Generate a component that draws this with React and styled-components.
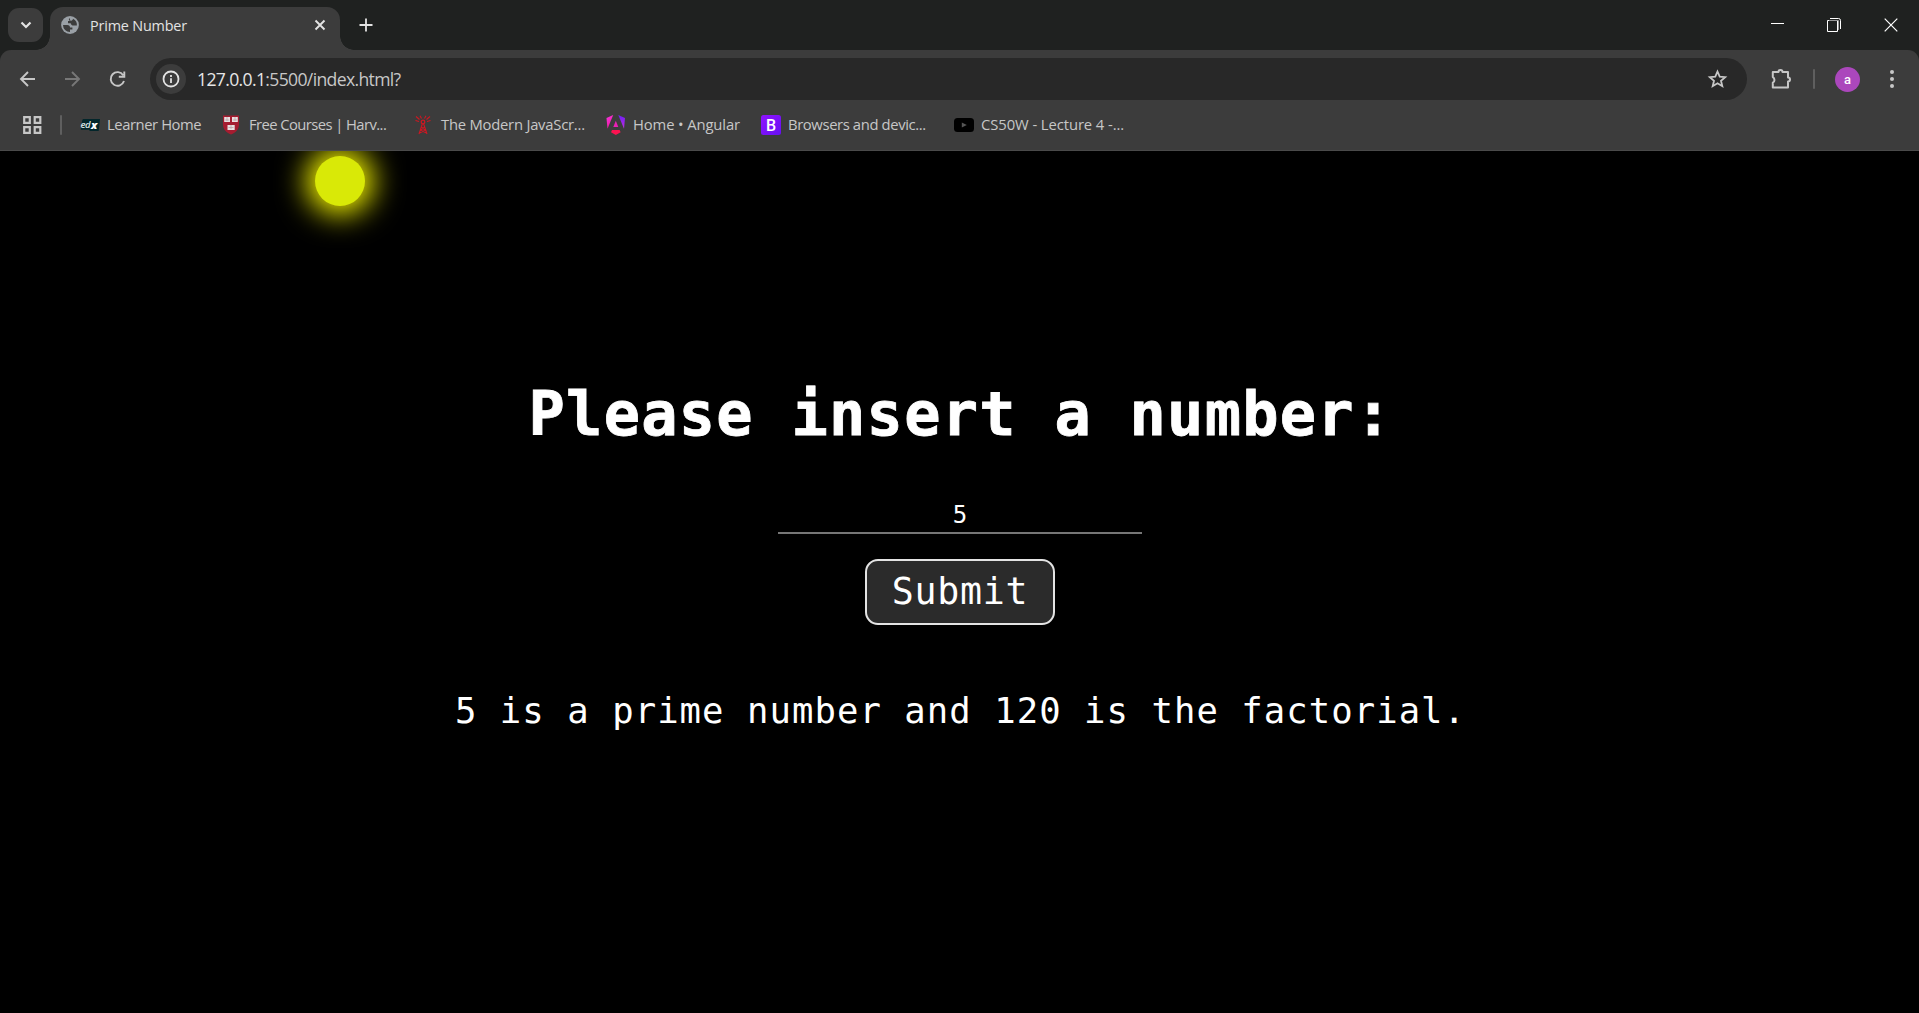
import React from "react";
import styled, { createGlobalStyle } from "styled-components";

const GlobalStyle = createGlobalStyle`
  * { box-sizing: border-box; }
  html, body { margin: 0; background: #000; overflow: hidden; }
`;

const Window = styled.div`
  display: flex;
  flex-direction: column;
  width: 100%;
  height: 1013px;
  font-family: "Open Sans", "Noto Sans", sans-serif;
  color: #c7c7c7;
  svg { display: block; flex: none; }
`;

const TabStrip = styled.header`
  display: flex;
  height: 50px;
  padding-left: 8px;
  background: #1f2120;
`;

const TabSearch = styled.button`
  display: flex;
  align-items: center;
  justify-content: center;
  width: 35px;
  height: 34px;
  margin: 8px 7px 0 0;
  padding: 0;
  border: 0;
  border-radius: 11px;
  background: #3c3c3c;
`;

const Tab = styled.div`
  position: relative;
  display: flex;
  align-items: center;
  width: 290px;
  height: 43px;
  margin-top: 7px;
  padding: 0 13px 7px 11px;
  border-radius: 13px 13px 0 0;
  background: #3c3c3c;
  &::before, &::after {
    content: "";
    position: absolute;
    bottom: 0;
    width: 14px;
    height: 14px;
  }
  &::before {
    left: -14px;
    background: radial-gradient(circle at 0 0, transparent 13.5px, #3c3c3c 14px);
  }
  &::after {
    right: -14px;
    background: radial-gradient(circle at 100% 0, transparent 13.5px, #3c3c3c 14px);
  }
`;

const Label = styled.span`
  flex: 1;
  min-width: 0;
  font-size: ${(p) => p.$size || 14.8}px;
  line-height: 24px;
  letter-spacing: ${(p) => p.$track || 0}px;
  white-space: pre;
  color: ${(p) => p.$color || "#c7c7c7"};
`;

const TabTitle = styled(Label)`
  margin-left: 11px;
  padding-top: 2px;
`;

const NewTab = styled.div`
  margin: 17px 0 0 19px;
`;

const WindowControls = styled.div`
  display: flex;
  align-items: center;
  gap: 43px;
  margin-left: auto;
  padding-right: 21px;
  height: 49px;
`;

const ToolbarBacking = styled.div`
  background: #1f2120;
`;

const Toolbar = styled.nav`
  display: flex;
  align-items: center;
  height: 58px;
  padding: 0 15px 0 17px;
  border-radius: 11px 11px 0 0;
  background: #3c3c3c;
`;

const NavButtons = styled.div`
  display: flex;
  gap: 23px;
  width: 133px;
`;

const Omnibox = styled.div`
  display: flex;
  align-items: center;
  width: 1597px;
  height: 42px;
  padding: 0 17px 0 6px;
  border-radius: 21px;
  background: #282828;
`;

const SiteInfo = styled.span`
  display: flex;
  align-items: center;
  justify-content: center;
  width: 30px;
  height: 30px;
  margin-right: 11px;
  border-radius: 50%;
  background: #3c3c3c;
`;

const Host = styled.span`
  color: #e6e6e6;
`;

const Divider = styled.span`
  flex: none;
  width: 2px;
  height: 20px;
  border-radius: 1px;
  background: #5f5f5f;
`;

const ToolbarDivider = styled(Divider)`
  margin: 0 20px;
`;

const ToolbarActions = styled.div`
  display: flex;
  align-items: center;
  margin-left: 22px;
`;

const Avatar = styled.span`
  display: flex;
  align-items: center;
  justify-content: center;
  width: 25px;
  height: 25px;
  margin-right: 29px;
  border-radius: 50%;
  background: #ab47bc;
  color: #fff;
  font: 500 13px/25px Roboto, sans-serif;
`;

const BookmarksBar = styled.nav`
  display: flex;
  align-items: center;
  height: 43px;
  padding: 0 0 9px 22px;
  border-bottom: 1px solid #4a4a4a;
  background: #3c3c3c;
`;

const BarDivider = styled(Divider)`
  margin: 0 18px 0 17px;
`;

const Bookmark = styled.div`
  display: flex;
  align-items: center;
  gap: 7px;
  width: ${(p) => p.$width}px;
  ${Label} { padding-bottom: 2px; }
`;

const Page = styled.main`
  display: flex;
  flex-direction: column;
  align-items: center;
  flex: 1;
  overflow: hidden;
  background: #000;
  color: #fff;
  font-family: "DejaVu Sans Mono", monospace;
`;

const Sun = styled.div`
  align-self: flex-start;
  flex: none;
  width: 50px;
  height: 50px;
  margin: 5px 0 0 315px;
  border-radius: 50%;
  background: #d9e907;
  box-shadow: 0 0 30px 8px yellow;
`;

const Title = styled.h1`
  margin: 168px 0 0;
  padding-left: 2px;
  font-size: 60.3px;
  line-height: 80px;
  letter-spacing: 1.26px;
  white-space: nowrap;
  -webkit-text-stroke: 0.8px #fff;
`;

const Form = styled.form`
  display: flex;
  flex-direction: column;
  align-items: center;
`;

const NumberInput = styled.input`
  width: 364px;
  height: 34px;
  margin-top: 46px;
  padding: 0 0 2px 1px;
  border: 0;
  border-bottom: 2px solid #767676;
  border-radius: 0;
  outline: 0;
  background: transparent;
  color: #fff;
  font: 24px/30px "DejaVu Sans Mono", monospace;
  text-align: center;
`;

const Submit = styled.button`
  width: 190.5px;
  height: 66.5px;
  margin: 24.5px 0 0 1px;
  padding: 0;
  border: 2px solid #e4e4e4;
  border-radius: 13px;
  background: #2b2b2b;
  color: #fff;
  font: 36.6px/60px "DejaVu Sans Mono", monospace;
  letter-spacing: 0.7px;
`;

const Result = styled.p`
  margin: 61px 0 0;
  padding-left: 2px;
  font-size: 35.6px;
  line-height: 50px;
  letter-spacing: 1.05px;
  white-space: nowrap;
`;

const Stroke = ({ w = 20, h = 20, color = "#c7c7c7", width = 2, children }) => (
  <svg width={w} height={h} viewBox={`0 0 ${w} ${h}`} fill="none" stroke={color} strokeWidth={width}>
    {children}
  </svg>
);

const Globe = () => (
  <svg width="18" height="18" viewBox="0 0 18 18">
    <circle cx="9" cy="9" r="8.9" fill="#9aa0a6" />
    <path d="M2 9h4.2c2 0 2.8 1 2.8 2.4h2.4v2.2H9v2.4A7 7 0 0 1 2 9zM8.5 2.1c-1 .6-.8 2.6.6 3H7v2.1h2.7c.3 1.6 1.3 2.4 2.8 2.4h3.4A7 7 0 0 0 12 2.7c-.2 1.4-1.3 2-2.6 2z" fill="#3c3c3c" />
  </svg>
);

const EdxIcon = () => (
  <svg width="20" height="20" viewBox="0 0 20 20">
    <path d="M3 4h17l-1.3 12H9.5v-1.3H.8L2.2 5.2z" fill="#03262b" />
    <text x="0.5" y="12.6" fontFamily="Open Sans, sans-serif" fontSize="9.5" fontStyle="italic" fontWeight="600" fill="#dce5e6" letterSpacing="-.5">ed</text>
    <text x="11" y="14" fontFamily="Open Sans, sans-serif" fontSize="11" fontStyle="italic" fontWeight="800" fill="#fff">x</text>
  </svg>
);

const ShieldIcon = () => (
  <svg width="20" height="20" viewBox="0 0 20 20">
    <path d="M1 .5h16v9c0 5-3 7.800-8 10-5-2.200-8-5-8-10z" fill="#a51c30" />
    <g fill="#e9dfe0">
      <path d="M2.200 2h5.800v5H2.200zM10 2h5.800v5H10zM5.500 10h7.200v5H5.500z" />
    </g>
    <path d="M5 2v4M13 2v4M9 10v4M3.200 5h4M11 5h4M6.500 12.500h5" stroke="#b59da1" strokeWidth=".7" />
  </svg>
);

const TowerIcon = () => (
  <Stroke color="#cf1722" width={1.3}>
    <circle cx="9" cy="7" r="1.8" />
    <path d="M8.300 9L5 19M9.700 9L13 19M7.300 12l4.300 3.200L5.500 18M10.700 12l-4.200 3.200 6 2.800M5.500 4.500L2 1.500M12.500 4.500L16 1.500M5 6.500L1.500 5.500M13 6.500l3.500-1M7.500 3.500L6 .8M10.500 3.500L12 .8" strokeWidth="1.100" />
  </Stroke>
);

const AngularIcon = () => (
  <svg width="20" height="20" viewBox="0 0 20 20">
    <defs>
      <linearGradient id="ngLeft" x1="0" y1="0" x2=".5" y2="1">
        <stop offset="0" stopColor="#f637e3" /><stop offset="1" stopColor="#f0189b" />
      </linearGradient>
      <linearGradient id="ngRight" x1="0" y1="0" x2="0" y2="1">
        <stop offset="0" stopColor="#6d20f5" /><stop offset="1" stopColor="#c12ce0" />
      </linearGradient>
    </defs>
    <path d="M7.200 0L.5 3.100l1 10.700z" fill="url(#ngLeft)" />
    <path d="M12.300 0L19 3.100l-1 10.700z" fill="url(#ngRight)" />
    <path d="M9.800 5.800l2.500 6.200H7.300z" fill="#ea1fb5" />
    <path d="M6 15h7.600l1 2.200L9.800 20 5 17.200z" fill="#fb1250" />
  </svg>
);

const BootstrapIcon = () => (
  <svg width="20" height="20" viewBox="0 0 20 20">
    <defs>
      <linearGradient id="bs" x1="0" y1="0" x2="1" y2="1">
        <stop offset="0" stopColor="#9013fe" /><stop offset="1" stopColor="#6610f2" />
      </linearGradient>
    </defs>
    <rect width="20" height="20" rx="2.500" fill="url(#bs)" />
    <text x="10" y="15.600" textAnchor="middle" fontFamily="Roboto, sans-serif" fontSize="16" fontWeight="500" fill="#fff">B</text>
  </svg>
);

const VideoIcon = () => (
  <svg width="20" height="20" viewBox="0 0 20 20">
    <rect y="3" width="20" height="14" rx="3.500" fill="#000" />
    <path d="M7.800 7.500l5 2.500-5 2.500z" fill="#555" />
  </svg>
);

const BOOKMARKS = [
  { icon: EdxIcon, text: "Learner Home", width: 142, track: -0.43 },
  { icon: ShieldIcon, text: "Free Courses | Harv...", width: 192, track: -0.58 },
  { icon: TowerIcon, text: "The Modern JavaScr...", width: 192, track: -0.23 },
  { icon: AngularIcon, text: "Home • Angular", width: 155, track: -0.12 },
  { icon: BootstrapIcon, text: "Browsers and devic...", width: 193, track: -0.38 },
  { icon: VideoIcon, text: "CS50W - Lecture 4 -...", width: 175, track: -0.08 },
];

export default function App() {
  return (
    <Window>
      <GlobalStyle />
      <TabStrip>
        <TabSearch aria-label="Search tabs">
          <Stroke w={12} h={8} color="#e3e3e3" width={2.2}><path d="M1.500 1.500L6 6l4.500-4.500" /></Stroke>
        </TabSearch>
        <Tab>
          <Globe />
          <TabTitle $size={14.4} $track={-0.18} $color="#e3e3e3">Prime Number</TabTitle>
          <Stroke w={14} h={14} color="#e3e3e3" width={1.9}><path d="M2.500 2.500l9 9M11.500 2.500l-9 9" /></Stroke>
        </Tab>
        <NewTab>
          <Stroke w={14} h={16} color="#e3e3e3" width={1.8}><path d="M7 1.500v13M.5 8h13" /></Stroke>
        </NewTab>
        <WindowControls>
          <Stroke w={13} h={15} color="#fff" width={1}><path d="M0 6.500h13" /></Stroke>
          <Stroke w={14} h={14} color="#fff" width={1}>
            <path d="M.5 2.500h10v11H.5z" />
            <path d="M3 .5h8.500a2 2 0 0 1 2 2V11" />
            <path d="M2 2.500h9.500V12" stroke="#999" />
          </Stroke>
          <Stroke w={14} h={14} color="#fff" width={1.2}><path d="M.7.700l12.600 12.600M13.300.7L.7 13.300" /></Stroke>
        </WindowControls>
      </TabStrip>
      <ToolbarBacking>
        <Toolbar>
          <NavButtons>
            <Stroke w={22} h={22} width={1.9}><path d="M18 11H4.500M11 4l-7 7 7 7" /></Stroke>
            <Stroke w={22} h={22} width={1.9} color="#777"><path d="M3 11h13.500M10 4l7 7-7 7" /></Stroke>
            <Stroke w={22} h={22} width={1.9}><path d="M16.200 7.200A6.800 6.800 0 1 0 17 13M17.300 3.500v5.300h-5.500" /></Stroke>
          </NavButtons>
          <Omnibox>
            <SiteInfo>
              <Stroke w={18} h={18} color="#e3e3e3" width={1.8}><circle cx="9" cy="9" r="7.500" /><path d="M9 8.200v4.800M9 5v1.900" /></Stroke>
            </SiteInfo>
            <Label $size={17.6} $track={-0.66}><Host>127.0.0.1</Host>:5500/index.html?</Label>
            <Stroke w={24} h={24} width={1.8}><path d="M11.500 4.500l2.200 5.100 5.500.5-4.200 3.700 1.300 5.400-4.800-2.900-4.800 2.900 1.300-5.400-4.200-3.700 5.500-.5z" /></Stroke>
          </Omnibox>
          <ToolbarActions>
            <Stroke w={24} h={24} width={2}>
              <path d="M4 5h5.500a2 2 0 0 1 4 0H19v5.500a2 2 0 0 1 0 4v6H3.800v-4.800a3.200 3.200 0 0 0 0-5.600V5z" strokeLinejoin="round" />
            </Stroke>
            <ToolbarDivider />
            <Avatar>a</Avatar>
            <svg width="6" height="20" viewBox="0 0 6 20" fill="#c7c7c7"><circle cx="3" cy="3" r="2" /><circle cx="3" cy="10" r="2" /><circle cx="3" cy="17" r="2" /></svg>
          </ToolbarActions>
        </Toolbar>
      </ToolbarBacking>
      <BookmarksBar>
        <Stroke w={21} h={20} width={2.2}><path d="M2.200 2.200h5.600v5.600H2.200zM12.700 2.200h5.600v5.600h-5.600zM2.200 12.200h5.600v5.600H2.200zM12.700 12.200h5.600v5.600h-5.600z" /></Stroke>
        <BarDivider />
        {BOOKMARKS.map(({ icon: Icon, text, width, track }) => (
          <Bookmark key={text} $width={width}>
            <Icon />
            <Label $track={track}>{text}</Label>
          </Bookmark>
        ))}
      </BookmarksBar>
      <Page>
        <Sun />
        <Title>Please insert a number:</Title>
        <Form onSubmit={(e) => e.preventDefault()}>
          <NumberInput defaultValue="5" aria-label="Number" />
          <Submit>Submit</Submit>
        </Form>
        <Result>5 is a prime number and 120 is the factorial.</Result>
      </Page>
    </Window>
  );
}
